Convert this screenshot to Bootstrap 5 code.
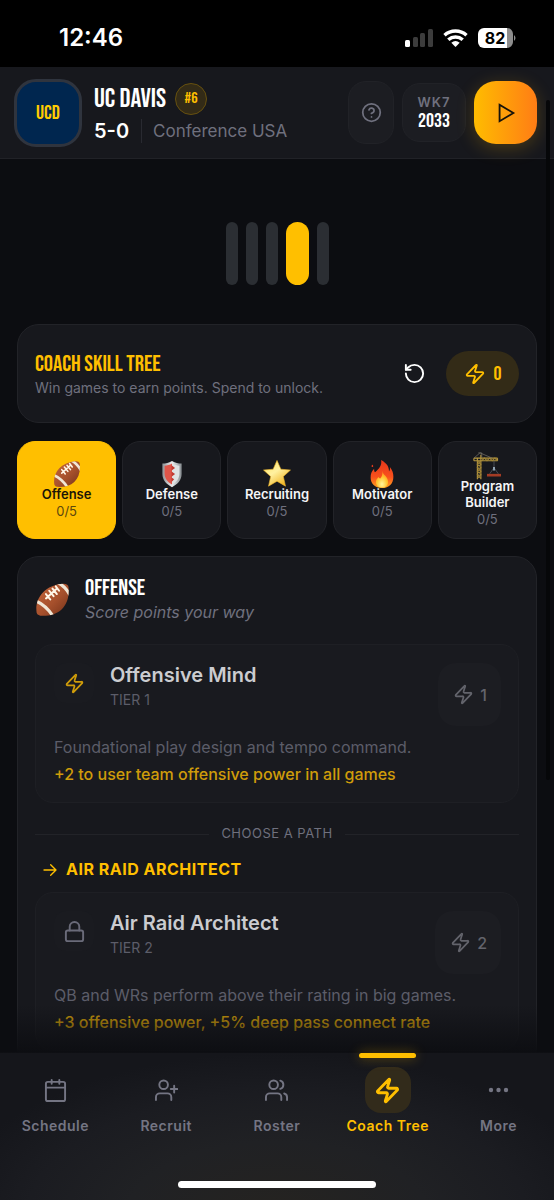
<!DOCTYPE html>
<html lang="en" data-bs-theme="dark">
<head>
<meta charset="utf-8">
<meta name="viewport" content="width=device-width, initial-scale=1">
<title>Coach Skill Tree</title>
<link href="https://cdn.jsdelivr.net/npm/bootstrap@5.3.0/dist/css/bootstrap.min.css" rel="stylesheet">
<style>
:root{--gold:#ffbf00;--muted:#6f707e;--panel:#17181d;--line:#222328}
body{font-family:Inter,"Liberation Sans",sans-serif;background:#0c0d11;color:#fff}
a{text-decoration:none}
button{font-family:inherit}
.display-face{font-family:"Bebas Neue","Roboto Condensed","Liberation Sans Narrow",sans-serif;font-weight:400}
.ico{fill:none;stroke:currentColor;stroke-width:2;stroke-linecap:round;stroke-linejoin:round;display:block;flex:none}
.gold{color:var(--gold)}
.dim{color:var(--muted)}
/* status bar */
.statusbar{height:67px;background:#000;padding:8px 38px 0 59px}
.clock{font-size:24px;line-height:28px;font-weight:600}
/* header */
.topbar{height:92px;background:#17181d;border-bottom:1px solid #212227;padding:0 17px 0 14px}
.crest{width:68px;height:68px;border-radius:22px;border:3px solid #2f343e;background:#00264f;color:#fc0;font-size:20px}
.team-row{gap:9px}
.team{font-size:27px;line-height:32px}
.rank{width:32px;height:32px;border:1px solid #66500f;background:#332b17;font-size:16px}
.record{font-size:20px;line-height:24px;font-weight:600}
.conf{font-size:17px;line-height:24px;border-left:1px solid #292a31;padding-left:11px}
.chip{background:#1c1d22;border:1px solid #212227;border-radius:18px;padding:0}
.help{width:46px;height:63px}
.week{width:64px;height:59px}
.week-no{font-size:13px;line-height:18px;font-weight:600;letter-spacing:1px}
.year{font-size:20px;line-height:21px}
.play{width:63px;height:63px;border:0;border-radius:22px;background:linear-gradient(90deg,#ffbc00,#ff7d15);box-shadow:0 4px 18px rgba(255,180,0,.22);color:#17130a;padding:0}
/* scroll area */
.content{min-height:0;overflow-y:auto;scrollbar-width:none;padding:0 17px}
.content::-webkit-scrollbar{display:none}
.thumb{position:absolute;right:4px;top:100px;width:4px;height:680px;border-radius:2px;background:#060709}
.pager{gap:8px;padding:63px 0 39px}
.pager button{width:12px;height:63px;border:0;border-radius:12px;background:#2b2e33;padding:0}
.pager button.on{width:23px;background:var(--gold)}
.panel{background:var(--panel);border:1px solid var(--line);border-radius:22px;padding:17px}
.tree-head{height:99px}
.tree-title{font-size:23px;line-height:28px}
.text-14{font-size:14px;line-height:20px}
.points{width:73px;height:45px;border-radius:23px;background:#332b17;font-size:20px}
.tabs{display:grid;grid-template-columns:repeat(5,1fr);gap:6px;margin:18px 0 17px}
.tab{height:98px;border:1px solid var(--line);border-radius:18px;background:var(--panel);color:#f5f5f7;padding:0;font-size:13px;line-height:16px;font-weight:600}
.tab svg{width:28px;height:28px;margin-bottom:-2px}
.tab span{font-weight:400;color:var(--muted);line-height:18px}
.tab.on{background:var(--gold);border-color:var(--gold);color:#1b1607}
.tab.on span{color:#5c480d}
.path-head{gap:15px;height:50px}
.path-title{font-size:23px;line-height:25px}
.text-16{font-size:16px;line-height:22px}
.skill{background:#191a1f;border:1px solid #1e1f24;border-radius:18px;padding:18px 17px 14px 18px;min-height:159px}
.path-head + .skill{margin-top:20px}
.skill-ico{width:40px;height:40px;border-radius:12px;background:#1a1b20;color:#6a6b79}
.skill-ico.ready{color:#cf9c0a}
.skill-name{font-size:20px;line-height:24px;font-weight:600;color:#cbccd0}
.text-tier{font-size:14px;line-height:26px;color:#5c5d69}
.cost{height:63px;border:0;border-radius:18px;background:#1c1d22;color:#63646c;font-size:16px;font-weight:500;padding:0 14px 0 15px;gap:6px}
.skill-text{font-size:16px;line-height:27px}
.desc{color:#5c5d69}
.perk{color:#cf9c0a;font-weight:500}
.divider{gap:12px;height:22px;margin-top:20px;font-size:13px;letter-spacing:.5px}
.divider:before,.divider:after{content:"";flex:1;height:1px;background:#222328}
.route{gap:8px;height:26px;margin:12px 0 9px;padding-left:7px;font-size:16px;font-weight:700;letter-spacing:.5px}
.fade-out{position:absolute;left:0;right:0;bottom:100%;height:48px;background:linear-gradient(rgba(12,13,17,0),rgba(12,13,17,.92));pointer-events:none}
/* bottom navigation */
.dock{height:148px;border-top:1px solid #25262b;background:radial-gradient(ellipse 60% 110% at 50% 110%,#252320 0,#202124 45%,#1b1c21 75%,#15161b 100%)}
.dock-links{padding-top:14px}
.dock-link{width:20%;color:#747583;font-size:14px;line-height:20px;font-weight:600;gap:3px;letter-spacing:.5px;position:relative}
.dock-link .pill{width:46px;height:46px;border-radius:16px}
.dock-link.on{color:var(--gold)}
.dock-link.on .pill{background:#322b1b}
.dock-link.on .ico{stroke-width:2.5}
.dock-link.on:before{content:"";position:absolute;top:-14px;width:57px;height:5px;border-radius:3px;background:var(--gold);box-shadow:0 0 12px rgba(255,191,0,.4)}
.homebar{width:198px;height:7px;border-radius:4px;background:#fff;position:absolute;bottom:12px;left:50%;margin-left:-99px}
</style>
</head>
<body>
<svg width="0" height="0" class="position-absolute" aria-hidden="true">
  <defs>
    <symbol id="bolt" viewBox="0 0 24 24"><path d="M4 14a1 1 0 0 1-.78-1.63l9.9-10.2a.5.5 0 0 1 .86.46l-1.92 6.02A1 1 0 0 0 13 10h7a1 1 0 0 1 .78 1.63l-9.9 10.2a.5.5 0 0 1-.86-.46l1.92-6.02A1 1 0 0 0 11 14z"/></symbol>
    <linearGradient id="leather" x1="0" y1="0" x2="1" y2="1"><stop offset="0" stop-color="#c8693e"/><stop offset=".55" stop-color="#a6502c"/><stop offset="1" stop-color="#6f2f18"/></linearGradient>
    <linearGradient id="steel"><stop offset="0" stop-color="#8b9094"/><stop offset=".5" stop-color="#eceeef"/><stop offset="1" stop-color="#878c90"/></linearGradient>
    <linearGradient id="starfill" x1="0" y1="0" x2=".7" y2="1"><stop offset="0" stop-color="#ffe45c"/><stop offset=".5" stop-color="#fff1a0"/><stop offset="1" stop-color="#efb321"/></linearGradient>
    <linearGradient id="flame" x1="0" y1="0" x2="0" y2="1"><stop offset="0" stop-color="#e5371b"/><stop offset=".6" stop-color="#f9501c"/><stop offset="1" stop-color="#ffa41f"/></linearGradient>
    <radialGradient id="core" cx=".5" cy=".8" r=".7"><stop offset="0" stop-color="#fff59a"/><stop offset=".6" stop-color="#ffc52f"/><stop offset="1" stop-color="#ff861d"/></radialGradient>
    <clipPath id="ballshape"><path d="M1.500 28C-.5 16 8 2.500 26 1.500c3 0 4.500 1 4.700 3.500C32 22 22 31 7 30.800c-3 0-5-.8-5.500-2.800z"/></clipPath>
    <symbol id="football" viewBox="0 0 32 32"><g clip-path="url(#ballshape)"><path fill="url(#leather)" d="M0 0h32v32H0z"/><path d="M0 17q10 4 17 15M20 0q8 4 12 12" fill="none" stroke="#f0e6d6" stroke-width="3"/></g><path d="M10 15L20 6M10 11l4 5M13 8l4 5M16 6l4 5M19 4l3 4" fill="none" stroke="#fff7e9" stroke-width="1.800" stroke-linecap="round"/></symbol>
    <symbol id="shield" viewBox="0 0 32 32"><path d="M16 1c4 2 7 3 11 3v12c0 7-5 12-11 15C10 28 5 23 5 16V4c4 0 7-1 11-3z" fill="url(#steel)"/><path d="M16 4v24C11 25 7.500 21 7.500 15V6.500c3 0 6-1 8.500-2.500z" fill="#df5549"/><path d="M16 4c3 1.500 5.500 2.500 8.500 2.500V15c0 6-3.500 10-8.500 13z" fill="#dfe2e3"/><path d="M15.500 6l4 3-4 3zM15.500 13l4 3-4 3zM15.500 20l3 2-3 3z" fill="#c23a31"/></symbol>
    <symbol id="star" viewBox="0 0 32 32"><path d="M16 .5l4.400 10 11 1-8.200 7.400 2.500 11L16 24.200l-9.700 5.700 2.500-11L.6 11.500l11-1z" fill="url(#starfill)" stroke="#f0b72b" stroke-width=".7" stroke-linejoin="round"/></symbol>
    <symbol id="fire" viewBox="0 0 32 32"><path d="M15 0c7 4 9 8 9 13 1-1 1.500-3 1-5 3 4 4 7 4 11 0 8-5 13-13 13S3 27 3 20c0-4 1-7 4-10 0 2 0 3 1 4 5-4 8-8 7-14z" fill="url(#flame)"/><path d="M4 7q1-3 2 0-1 2-2 0z" fill="#e5371b"/><path d="M16 12c1 5 7 7 7 13 0 4-3 6.500-7 6.500S9 29 9 25c0-3 2-4 3-6 0 1 1 2 2 2 2-2 3-5 2-9z" fill="url(#core)"/></symbol>
    <symbol id="crane" viewBox="0 0 32 32"><path d="M5 7v24M9 3v28M1 7h27M1 10h27M1 7v3M28 7v3" fill="none" stroke="#b9993f" stroke-width="1.300"/><path d="M5 10l4 4-4 4 4 4-4 4 4 4M9 10l-4 4 4 4-4 4 4 4-4 4M10 10l3-3 3 3 3-3 3 3 3-3 3 3" fill="none" stroke="#a08436" stroke-width="1.300"/><path d="M8 1L1 7M8 1l14 6M6 1h4v5" fill="none" stroke="#77736a" stroke-width=".8"/><path d="M24 10v10M24 18l-5 7M24 18l5 7" fill="none" stroke="#5d636b" stroke-width=".8"/><path d="M23 17h2v4h-2z" fill="#9cb0c0"/><path d="M16 25h16v3H16z" fill="#a33b24"/></symbol>
  </defs>
</svg>

<div class="vh-100 d-flex flex-column position-relative overflow-hidden">
  <div class="statusbar d-flex align-items-center justify-content-between flex-shrink-0">
    <div class="clock">12:46</div>
    <svg width="114" height="22" viewBox="0 0 114 22" role="img" aria-label="Signal, Wi-Fi and 82 percent battery">
      <rect x="3" y="13" width="5" height="7" rx="1.500" fill="#fff"/><rect x="11" y="10" width="5" height="10" rx="1.500" fill="#3c3c3c"/><rect x="18" y="6" width="5" height="14" rx="1.500" fill="#3c3c3c"/><rect x="26" y="2" width="5" height="18" rx="1.500" fill="#3c3c3c"/>
      <g fill="none" stroke="#fff" stroke-width="3.500"><path d="M42.500 8.200a16.500 16.500 0 0 1 22 0"/><path d="M46.300 12.800a11 11 0 0 1 14.400 0"/></g><path d="M49.300 15.800a6.500 6.500 0 0 1 8.400 0L53.500 20z" fill="#fff"/>
      <path d="M82 1h23v20H82a6 6 0 0 1-6-6V7a6 6 0 0 1 6-6z" fill="#fff"/><path d="M105 1a6 6 0 0 1 6 6v8a6 6 0 0 1-6 6zM112 8q3 3 0 6z" fill="#8d8d8d"/>
      <text x="93" y="17" text-anchor="middle" font-family="Inter" font-size="16" font-weight="700">82</text>
    </svg>
  </div>

  <header class="topbar d-flex align-items-center flex-shrink-0">
    <div class="crest display-face d-flex align-items-center justify-content-center flex-shrink-0">UCD</div>
    <div class="ms-2 ps-1 flex-grow-1 text-nowrap">
      <div class="team-row d-flex align-items-center"><h1 class="team display-face m-0">UC DAVIS</h1><span class="rank gold display-face rounded-circle d-flex align-items-center justify-content-center">#6</span></div>
      <div class="d-flex align-items-center mt-1"><span class="record pe-2 me-1">5-0</span><span class="conf dim">Conference USA</span></div>
    </div>
    <div class="d-flex align-items-center gap-2">
      <button type="button" class="chip help dim d-flex align-items-center justify-content-center" aria-label="Help"><svg class="ico" width="21" height="21" viewBox="0 0 24 24"><circle cx="12" cy="12" r="10"/><path d="M9.100 9a3 3 0 0 1 5.800 1c0 2-3 3-3 3M12 17h.01"/></svg></button>
      <div class="chip week text-center d-flex flex-column justify-content-center"><div class="week-no dim">WK7</div><div class="year display-face">2033</div></div>
      <button type="button" class="play d-flex align-items-center justify-content-center" aria-label="Play"><svg class="ico" width="22" height="22" viewBox="0 0 24 24"><path stroke-linejoin="miter" d="M5 3l15 9-15 9z"/></svg></button>
    </div>
  </header>

  <main class="content flex-grow-1">
    <div class="pager d-flex justify-content-center">
      <button type="button" aria-label="Page 1"></button><button type="button" aria-label="Page 2"></button><button type="button" aria-label="Page 3"></button><button type="button" class="on" aria-label="Page 4"></button><button type="button" aria-label="Page 5"></button>
    </div>

    <section class="panel tree-head d-flex align-items-center">
      <div class="flex-grow-1"><h2 class="tree-title display-face gold m-0">COACH SKILL TREE</h2><p class="text-14 dim m-0">Win games to earn points. Spend to unlock.</p></div>
      <button type="button" class="btn border-0 p-0 me-3 text-white" aria-label="Reset"><svg class="ico me-1" width="23" height="23" viewBox="0 0 24 24"><path d="M3 12a9 9 0 1 0 9-9 9.750 9.750 0 0 0-6.740 2.740L3 8"/><path d="M3 3v5h5"/></svg></button>
      <div class="points gold display-face d-flex align-items-center justify-content-center gap-2"><svg class="ico" width="22" height="22"><use href="#bolt"/></svg>0</div>
    </section>

    <div class="tabs">
      <button type="button" class="tab on d-flex flex-column align-items-center justify-content-center"><svg><use href="#football"/></svg>Offense<span>0/5</span></button>
      <button type="button" class="tab d-flex flex-column align-items-center justify-content-center"><svg><use href="#shield"/></svg>Defense<span>0/5</span></button>
      <button type="button" class="tab d-flex flex-column align-items-center justify-content-center"><svg><use href="#star"/></svg>Recruiting<span>0/5</span></button>
      <button type="button" class="tab d-flex flex-column align-items-center justify-content-center"><svg><use href="#fire"/></svg>Motivator<span>0/5</span></button>
      <button type="button" class="tab d-flex flex-column align-items-center justify-content-center"><svg><use href="#crane"/></svg>Program<br>Builder<span>0/5</span></button>
    </div>

    <section class="panel">
      <div class="path-head d-flex align-items-center"><svg width="35" height="35"><use href="#football"/></svg><div><h2 class="path-title display-face m-0">OFFENSE</h2><p class="text-16 dim fst-italic m-0">Score points your way</p></div></div>

      <article class="skill">
        <div class="d-flex align-items-start">
          <div class="skill-ico ready d-flex align-items-center justify-content-center"><svg class="ico" width="21" height="21"><use href="#bolt"/></svg></div>
          <div class="flex-grow-1 ms-3"><h3 class="skill-name m-0">Offensive Mind</h3><div class="text-tier">TIER 1</div></div>
          <button type="button" class="cost d-flex align-items-center"><svg class="ico" width="21" height="21"><use href="#bolt"/></svg>1</button>
        </div>
        <p class="skill-text desc mb-0 mt-2">Foundational play design and tempo command.</p>
        <p class="skill-text perk m-0">+2 to user team offensive power in all games</p>
      </article>

      <div class="divider dim d-flex align-items-center">CHOOSE A PATH</div>
      <h3 class="route gold d-flex align-items-center"><svg class="ico" width="16" height="16" viewBox="0 0 24 24"><path d="M3 12h18M13 4l8 8-8 8"/></svg>AIR RAID ARCHITECT</h3>

      <article class="skill">
        <div class="d-flex align-items-start">
          <div class="skill-ico d-flex align-items-center justify-content-center"><svg class="ico" width="23" height="23" viewBox="0 0 24 24"><rect x="3" y="11" width="18" height="11" rx="2"/><path d="M7 11V7a5 5 0 0 1 10 0v4"/></svg></div>
          <div class="flex-grow-1 ms-3"><h3 class="skill-name m-0">Air Raid Architect</h3><div class="text-tier">TIER 2</div></div>
          <button type="button" class="cost d-flex align-items-center"><svg class="ico" width="21" height="21"><use href="#bolt"/></svg>2</button>
        </div>
        <p class="skill-text desc mb-0 mt-2">QB and WRs perform above their rating in big games.</p>
        <p class="skill-text perk m-0">+3 offensive power, +5% deep pass connect rate</p>
      </article>
    </section>
  </main>
  <div class="thumb"></div>

  <nav class="dock position-relative flex-shrink-0" aria-label="Main">
    <div class="fade-out"></div>
    <div class="dock-links d-flex">
      <a href="#" class="dock-link d-flex flex-column align-items-center"><span class="pill d-flex align-items-center justify-content-center"><svg class="ico" width="23" height="23" viewBox="0 0 24 24"><path d="M8 1v4M16 1v4M2 9h20"/><rect x="2" y="3" width="20" height="20" rx="2"/></svg></span>Schedule</a>
      <a href="#" class="dock-link d-flex flex-column align-items-center"><span class="pill d-flex align-items-center justify-content-center"><svg class="ico" width="23" height="23" viewBox="0 0 24 24"><path d="M17 22v-3a4 4 0 0 0-4-4H5a4 4 0 0 0-4 4v3M20 7v7M23.500 10.500h-7"/><circle cx="9" cy="6" r="4.500"/></svg></span>Recruit</a>
      <a href="#" class="dock-link d-flex flex-column align-items-center"><span class="pill d-flex align-items-center justify-content-center"><svg class="ico" width="23" height="23" viewBox="0 0 24 24"><path d="M17 22v-3a4 4 0 0 0-4-4H5a4 4 0 0 0-4 4v3M23 22v-3a4 4 0 0 0-3-3.900M16 1.700a4.500 4.500 0 0 1 0 8.600"/><circle cx="9" cy="6" r="4.500"/></svg></span>Roster</a>
      <a href="#" class="dock-link on d-flex flex-column align-items-center" aria-current="page"><span class="pill d-flex align-items-center justify-content-center"><svg class="ico" width="27" height="27"><use href="#bolt"/></svg></span>Coach Tree</a>
      <a href="#" class="dock-link d-flex flex-column align-items-center"><span class="pill d-flex align-items-center justify-content-center"><svg width="21" height="6" viewBox="0 0 21 6" fill="currentColor"><circle cx="3" cy="3" r="2.200"/><circle cx="10.500" cy="3" r="2.200"/><circle cx="18" cy="3" r="2.200"/></svg></span>More</a>
    </div>
    <div class="homebar"></div>
  </nav>
</div>
<script src="https://cdn.jsdelivr.net/npm/bootstrap@5.3.0/dist/js/bootstrap.bundle.min.js"></script>
</body>
</html>
